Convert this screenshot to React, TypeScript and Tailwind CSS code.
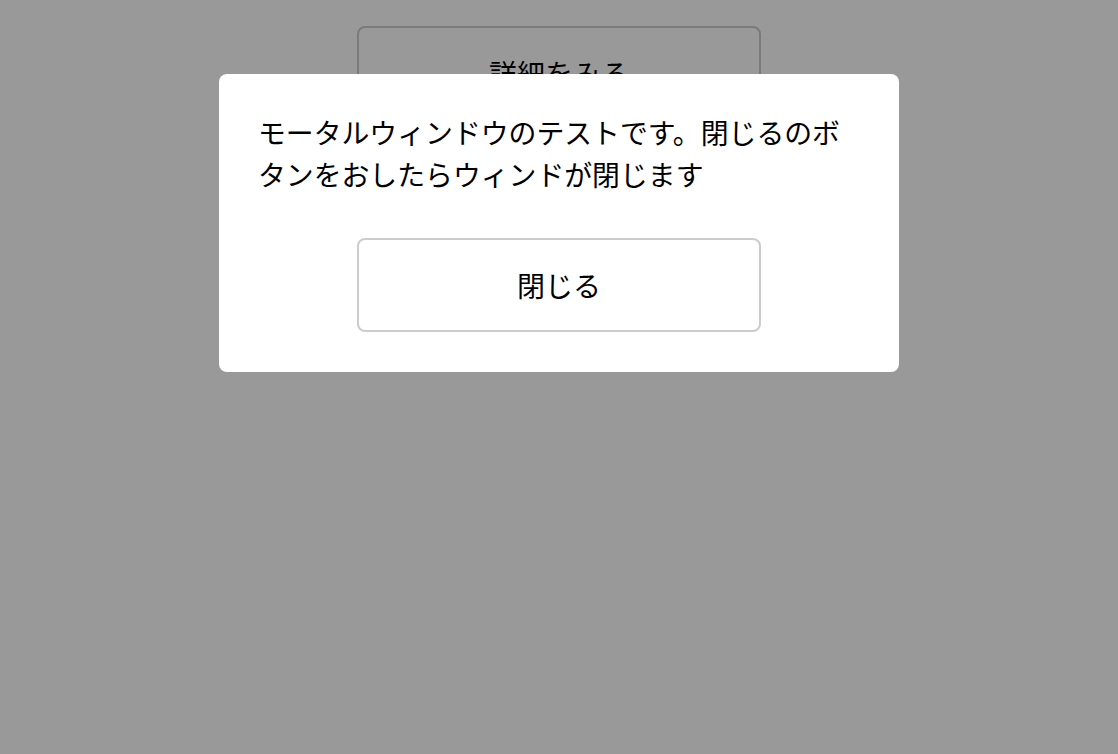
import React from "react";

export default function App() {
  const font = { fontFamily: '"Noto Sans CJK JP", "Noto Sans", sans-serif' };
  return (
    <div className="relative min-h-[754px] w-full bg-white text-black" style={font}>
      <div className="flex justify-center pt-[26px]">
        <button className="flex h-[94px] w-[404px] items-center justify-center rounded-[8px] border-2 border-[#cccccc] bg-white text-[28px] leading-[42px] text-black">
          詳細をみる
        </button>
      </div>
      <div className="fixed inset-0 bg-black/40">
        <div className="mx-auto mt-[74px] w-[680px] rounded-[8px] bg-white px-[39px] pt-[37px] pb-[40px]">
          <p className="text-[27.85px] leading-[42px] text-black">
            モータルウィンドウのテストです。閉じるのボタンをおしたらウィンドが閉じます
          </p>
          <div className="mt-[43px] flex justify-center">
            <button className="flex h-[94px] w-[404px] items-center justify-center rounded-[8px] border-2 border-[#cccccc] bg-white text-[28px] leading-[42px] text-black">
              閉じる
            </button>
          </div>
        </div>
      </div>
    </div>
  );
}
